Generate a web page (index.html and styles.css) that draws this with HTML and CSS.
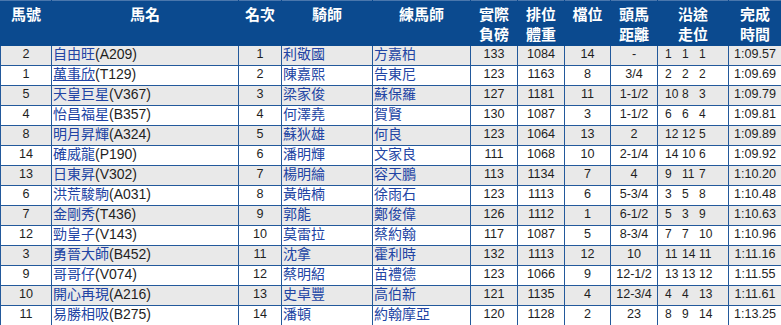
FILE: index.html
```html
<!DOCTYPE html>
<html lang="zh-Hant">
<head>
    <meta charset="UTF-8"/>
    <meta name="viewport" content="width=device-width, initial-scale=1.0"/>
    <title>賽果</title>
    <link rel="stylesheet" href="styles.css">
</head>
<body>
<table class="results">
    <colgroup>
        <col class="c-no">
        <col class="c-horse">
        <col class="c-place">
        <col class="c-jockey">
        <col class="c-trainer">
        <col class="c-wt">
        <col class="c-dwt">
        <col class="c-draw">
        <col class="c-lbw">
        <col class="c-pos">
        <col class="c-time">
    </colgroup>
    <thead>
    <tr>
        <th>馬號</th>
        <th>馬名</th>
        <th>名次</th>
        <th>騎師</th>
        <th>練馬師</th>
        <th>實際<br>負磅</th>
        <th>排位<br>體重</th>
        <th>檔位</th>
        <th>頭馬<br>距離</th>
        <th>沿途<br>走位</th>
        <th>完成<br>時間</th>
    </tr>
    </thead>
    <tbody>
    <tr>
        <td>2</td>
        <td class="name"><a href="#">自由旺</a>(A209)</td>
        <td>1</td>
        <td class="name"><a href="#">利敬國</a></td>
        <td class="name"><a href="#">方嘉柏</a></td>
        <td>133</td>
        <td>1084</td>
        <td>14</td>
        <td>-</td>
        <td class="pos"><span>1</span><span>1</span><span>1</span></td>
        <td>1:09.57</td>
    </tr>
    <tr>
        <td>1</td>
        <td class="name"><a href="#" class="hovered">萬事欣</a>(T129)</td>
        <td>2</td>
        <td class="name"><a href="#">陳嘉熙</a></td>
        <td class="name"><a href="#">告東尼</a></td>
        <td>123</td>
        <td>1163</td>
        <td>8</td>
        <td>3/4</td>
        <td class="pos"><span>2</span><span>2</span><span>2</span></td>
        <td>1:09.69</td>
    </tr>
    <tr>
        <td>5</td>
        <td class="name"><a href="#">天皇巨星</a>(V367)</td>
        <td>3</td>
        <td class="name"><a href="#">梁家俊</a></td>
        <td class="name"><a href="#">蘇保羅</a></td>
        <td>127</td>
        <td>1181</td>
        <td>11</td>
        <td>1-1/2</td>
        <td class="pos"><span>10</span><span>8</span><span>3</span></td>
        <td>1:09.79</td>
    </tr>
    <tr>
        <td>4</td>
        <td class="name"><a href="#">怡昌福星</a>(B357)</td>
        <td>4</td>
        <td class="name"><a href="#">何澤堯</a></td>
        <td class="name"><a href="#">賀賢</a></td>
        <td>130</td>
        <td>1087</td>
        <td>3</td>
        <td>1-1/2</td>
        <td class="pos"><span>6</span><span>6</span><span>4</span></td>
        <td>1:09.81</td>
    </tr>
    <tr>
        <td>8</td>
        <td class="name"><a href="#">明月昇輝</a>(A324)</td>
        <td>5</td>
        <td class="name"><a href="#">蘇狄雄</a></td>
        <td class="name"><a href="#">何良</a></td>
        <td>123</td>
        <td>1064</td>
        <td>13</td>
        <td>2</td>
        <td class="pos"><span>12</span><span>12</span><span>5</span></td>
        <td>1:09.89</td>
    </tr>
    <tr>
        <td>14</td>
        <td class="name"><a href="#">確威龍</a>(P190)</td>
        <td>6</td>
        <td class="name"><a href="#">潘明輝</a></td>
        <td class="name"><a href="#">文家良</a></td>
        <td>111</td>
        <td>1068</td>
        <td>10</td>
        <td>2-1/4</td>
        <td class="pos"><span>14</span><span>10</span><span>6</span></td>
        <td>1:09.92</td>
    </tr>
    <tr>
        <td>13</td>
        <td class="name"><a href="#">日東昇</a>(V302)</td>
        <td>7</td>
        <td class="name"><a href="#">楊明綸</a></td>
        <td class="name"><a href="#">容天鵬</a></td>
        <td>113</td>
        <td>1134</td>
        <td>7</td>
        <td>4</td>
        <td class="pos"><span>9</span><span>11</span><span>7</span></td>
        <td>1:10.20</td>
    </tr>
    <tr>
        <td>6</td>
        <td class="name"><a href="#">洪荒駿駒</a>(A031)</td>
        <td>8</td>
        <td class="name"><a href="#">黃皓楠</a></td>
        <td class="name"><a href="#">徐雨石</a></td>
        <td>123</td>
        <td>1113</td>
        <td>6</td>
        <td>5-3/4</td>
        <td class="pos"><span>3</span><span>5</span><span>8</span></td>
        <td>1:10.48</td>
    </tr>
    <tr>
        <td>7</td>
        <td class="name"><a href="#">金剛秀</a>(T436)</td>
        <td>9</td>
        <td class="name"><a href="#">郭能</a></td>
        <td class="name"><a href="#">鄭俊偉</a></td>
        <td>126</td>
        <td>1112</td>
        <td>1</td>
        <td>6-1/2</td>
        <td class="pos"><span>5</span><span>3</span><span>9</span></td>
        <td>1:10.63</td>
    </tr>
    <tr>
        <td>12</td>
        <td class="name"><a href="#">勁皇子</a>(V143)</td>
        <td>10</td>
        <td class="name"><a href="#">莫雷拉</a></td>
        <td class="name"><a href="#">蔡約翰</a></td>
        <td>117</td>
        <td>1087</td>
        <td>5</td>
        <td>8-3/4</td>
        <td class="pos"><span>7</span><span>7</span><span>10</span></td>
        <td>1:10.96</td>
    </tr>
    <tr>
        <td>3</td>
        <td class="name"><a href="#">勇晉大師</a>(B452)</td>
        <td>11</td>
        <td class="name"><a href="#">沈拿</a></td>
        <td class="name"><a href="#">霍利時</a></td>
        <td>132</td>
        <td>1113</td>
        <td>12</td>
        <td>10</td>
        <td class="pos"><span>11</span><span>14</span><span>11</span></td>
        <td>1:11.16</td>
    </tr>
    <tr>
        <td>9</td>
        <td class="name"><a href="#">哥哥仔</a>(V074)</td>
        <td>12</td>
        <td class="name"><a href="#">蔡明紹</a></td>
        <td class="name"><a href="#">苗禮德</a></td>
        <td>123</td>
        <td>1066</td>
        <td>9</td>
        <td>12-1/2</td>
        <td class="pos"><span>13</span><span>13</span><span>12</span></td>
        <td>1:11.55</td>
    </tr>
    <tr>
        <td>10</td>
        <td class="name"><a href="#">開心再現</a>(A216)</td>
        <td>13</td>
        <td class="name"><a href="#">史卓豐</a></td>
        <td class="name"><a href="#">高伯新</a></td>
        <td>121</td>
        <td>1135</td>
        <td>4</td>
        <td>12-3/4</td>
        <td class="pos"><span>4</span><span>4</span><span>13</span></td>
        <td>1:11.61</td>
    </tr>
    <tr>
        <td>11</td>
        <td class="name"><a href="#">易勝相吸</a>(B275)</td>
        <td>14</td>
        <td class="name"><a href="#">潘頓</a></td>
        <td class="name"><a href="#">約翰摩亞</a></td>
        <td>120</td>
        <td>1128</td>
        <td>2</td>
        <td>23</td>
        <td class="pos"><span>8</span><span>9</span><span>14</span></td>
        <td>1:13.25</td>
    </tr>
    </tbody>
</table>
</body>
</html>
```

FILE: styles.css
```css
* {
    margin: 0;
    padding: 0;
}

body {
    background-color: #fff;
    font-family: "Liberation Sans", Arial, "Noto Sans CJK TC", sans-serif;
    font-size: 12.6px;
    color: #1e1e1e;
}

.results {
    width: 781px;
    border-collapse: collapse;
    table-layout: fixed;
}

.c-no { width: 51px; }
.c-horse { width: 187px; }
.c-place { width: 43px; }
.c-jockey { width: 91px; }
.c-trainer { width: 98px; }
.c-wt { width: 47px; }
.c-dwt { width: 47px; }
.c-draw { width: 46px; }
.c-lbw { width: 47px; }
.c-pos { width: 71px; }
.c-time { width: 53px; }

.results th {
    height: 40px;
    padding: 4px 0 0;
    background-color: #0b4a8f;
    border: 1px solid #0b4a8f;
    border-top-color: #4a77ad;
    color: #fff;
    font-size: 15px;
    font-weight: bold;
    line-height: 20px;
    vertical-align: top;
    text-align: center;
}

.results td {
    height: 19px;
    padding: 0 1px;
    border: 1px solid #23599b;
    line-height: 16px;
    vertical-align: top;
    text-align: center;
    white-space: nowrap;
}

.results tbody tr:nth-child(odd) td {
    background-color: #e9e9e9;
}

.results td.name {
    text-align: left;
    font-size: 14px;
}

.results a {
    color: #2144a4;
    text-decoration: none;
}

.results a.hovered {
    text-decoration: underline;
}

/* running positions sit in three fixed slots */
.results td.pos {
    text-align: left;
    padding-left: 7px;
    font-size: 12px;
}

.pos span {
    display: inline-block;
    width: 17px;
}
```
